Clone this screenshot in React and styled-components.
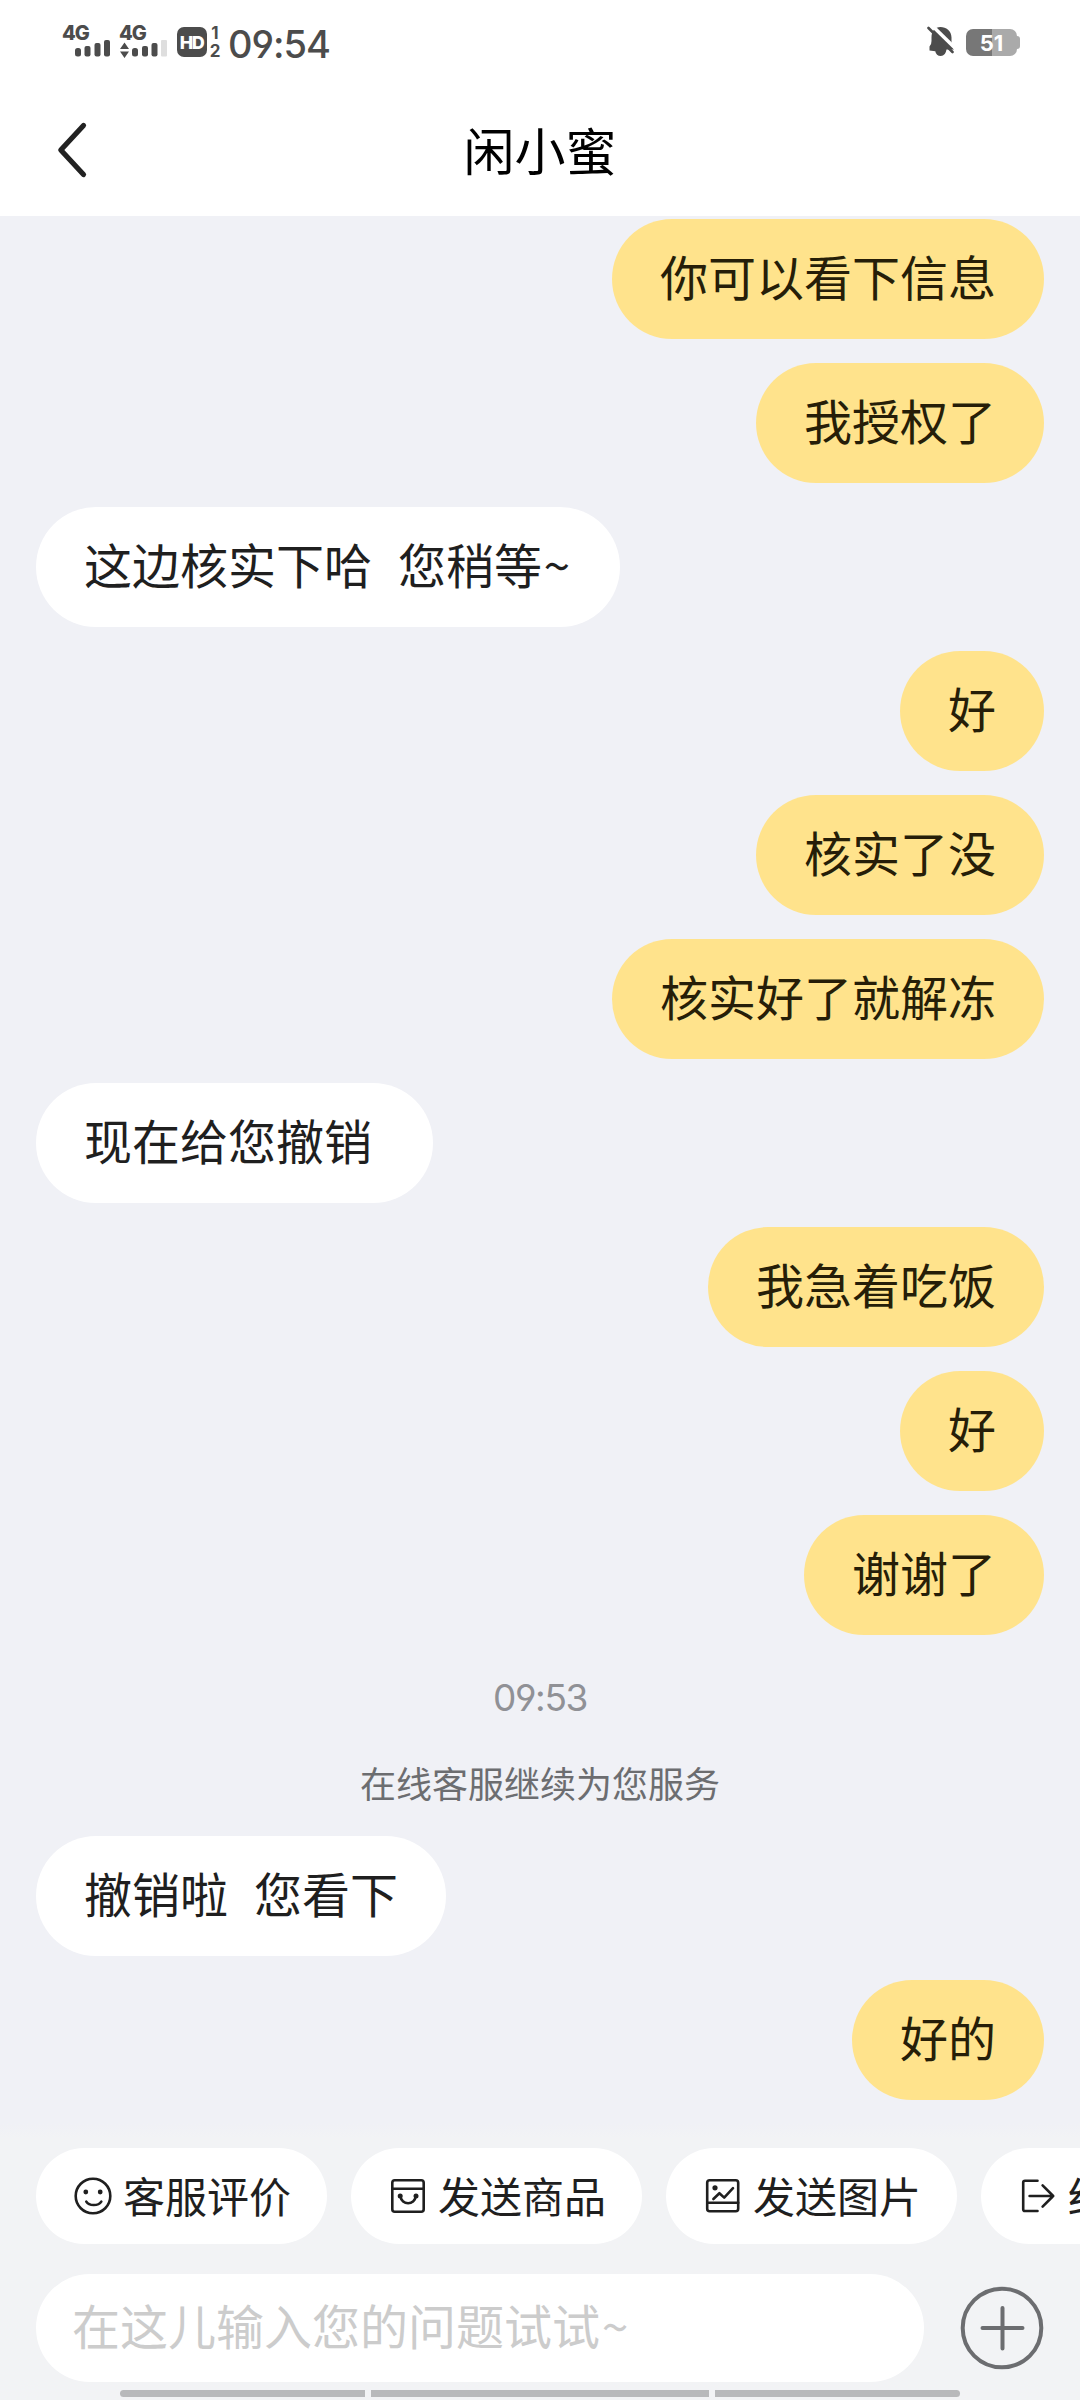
import React from "react";
import styled, { createGlobalStyle } from "styled-components";

const messages = [
  { id: 1, mine: true, text: "你可以看下信息" },
  { id: 2, mine: true, text: "我授权了" },
  { id: 3, text: "这边核实下哈  您稍等", tilde: true },
  { id: 4, mine: true, text: "好" },
  { id: 5, mine: true, text: "核实了没" },
  { id: 6, mine: true, text: "核实好了就解冻" },
  { id: 7, text: "现在给您撤销 " },
  { id: 8, mine: true, text: "我急着吃饭" },
  { id: 9, mine: true, text: "好" },
  { id: 10, mine: true, text: "谢谢了" },
];

const laterMessages = [
  { id: 11, text: "撤销啦  您看下" },
  { id: 12, mine: true, text: "好的" },
];

const SmileIcon = () => (
  <ChipIcon viewBox="0 0 42 42">
    <circle cx="21" cy="21" r="17.3" />
    <circle cx="13.8" cy="17" r="2.4" className="dot" />
    <circle cx="28.2" cy="17" r="2.4" className="dot" />
    <path d="M14.3 26.6C17 31.2 26.4 31.2 29.3 26.6" />
  </ChipIcon>
);

const BagIcon = () => (
  <ChipIcon viewBox="0 0 42 42">
    <rect x="5.3" y="5.3" width="31.4" height="31.4" rx="2.5" />
    <path d="M5.3 13.8H36.7M13.2 21C15 30.6 27.2 30.6 29 21" />
    <circle cx="13.2" cy="21" r="2.5" className="dot" />
    <circle cx="29" cy="21" r="2.5" className="dot" />
  </ChipIcon>
);

const PictureIcon = () => (
  <ChipIcon viewBox="0 0 42 42">
    <rect x="5.2" y="5.3" width="31" height="31" rx="2.5" />
    <path d="M5.2 27.8H36.2M11.4 24L17.4 18.2L22.2 22.6L31 13.2" />
    <circle cx="13" cy="12.8" r="2.6" className="dot" />
  </ChipIcon>
);

const ExitIcon = () => (
  <ChipIcon viewBox="0 0 42 42">
    <path d="M20.5 5.8H8Q6.2 5.8 6.2 7.6V34.2Q6.2 36 8 36H20.5" />
    <path d="M12.6 21H36.2M25.6 10.4L36.2 21L25.6 31.6" />
  </ChipIcon>
);

const chips = [
  { label: "客服评价", Icon: SmileIcon },
  { label: "发送商品", Icon: BagIcon },
  { label: "发送图片", Icon: PictureIcon },
  { label: "结束服务", Icon: ExitIcon },
];

const StatusBar = () => (
  <Status>
    <StatusGroup>
      <svg width="110" height="46" viewBox="-2 -10 110 46" fill="#4c4c4c">
        <NetText x="-1" y="15">4G</NetText>
        <rect x="12" y="23" width="6" height="8.5" rx="2.5" />
        <rect x="21.5" y="21" width="6" height="10.5" rx="2" />
        <rect x="31.5" y="18" width="6" height="13.5" rx="2" />
        <rect x="41" y="15" width="6" height="16.5" rx="2" />
        <NetText x="56" y="15">4G</NetText>
        <path d="M57 24L61.5 17.5L66 24ZM57 26.5H66L61.5 33Z" />
        <rect x="69" y="23" width="6" height="8.5" rx="2.5" />
        <rect x="79" y="21" width="6" height="10.5" rx="2" />
        <rect x="88.5" y="18" width="6" height="13.5" rx="2" />
        <rect x="98" y="15" width="6" height="16.5" rx="1" fill="#dedede" />
      </svg>
      <HdBadge>HD</HdBadge>
      <SimNumbers>
        <span>1</span>
        <span>2</span>
      </SimNumbers>
      <Clock>09:54</Clock>
    </StatusGroup>
    <StatusGroup>
      <BellIcon width="28" height="32" viewBox="0 0 28 32">
        <path
          d="M2.5 24.5V21.5Q4.5 20 4.5 16V12.5C4.5 6 8 2 13.5 2S24.5 6 24.5 12.5V18.5Q24.5 21 27 24.5H19.5Q18.5 31 13.8 31T8.3 26.2L2.5 25.5Z"
          fill="#4c4c4c"
        />
        <path d="M5 .5L29 24" stroke="#fff" strokeWidth="3.5" />
        <path d="M1.5 3L25.5 27" stroke="#4c4c4c" strokeWidth="2.6" strokeLinecap="round" />
      </BellIcon>
      <Battery>
        <BatteryBody>51</BatteryBody>
        <BatteryTip />
      </Battery>
    </StatusGroup>
  </Status>
);

const Message = ({ mine, text, tilde }) => (
  <Bubble $mine={mine}>
    {text}
    {tilde && <Tilde>~</Tilde>}
  </Bubble>
);

const App = () => {
  return (
    <>
      <GlobalStyle />
      <Screen>
        <StatusBar />
        <Header>
          <BackButton>
            <svg width="32" height="60" viewBox="0 0 32 60" fill="none">
              <path
                d="M27.5 5.5L4.8 30L27.5 54.5"
                stroke="#222"
                strokeWidth="5.2"
                strokeLinecap="round"
                strokeLinejoin="round"
              />
            </svg>
          </BackButton>
          <Title>闲小蜜</Title>
        </Header>
        <Chat>
          {messages.map((msg) => (
            <Message key={msg.id} {...msg} />
          ))}
          <TimeStamp>09:53</TimeStamp>
          <Notice>在线客服继续为您服务</Notice>
          {laterMessages.map((msg) => (
            <Message key={msg.id} {...msg} />
          ))}
        </Chat>
        <Footer>
          <Chips>
            {chips.map(({ label, Icon }) => (
              <Chip key={label}>
                <Icon />
                <ChipLabel>{label}</ChipLabel>
              </Chip>
            ))}
          </Chips>
          <InputRow>
            <Input>
              在这儿输入您的问题试试<Tilde>~</Tilde>
            </Input>
            <AddButton>
              <svg width="84" height="84" viewBox="0 0 84 84" fill="none" stroke="#6c6d70">
                <circle cx="42" cy="42" r="39.3" strokeWidth="4" />
                <path d="M22.5 42H62.5M42.5 22V62.5" strokeWidth="4" strokeLinecap="round" />
              </svg>
            </AddButton>
          </InputRow>
          <NavBar>
            <NavPill $width={245} $left />
            <NavPill $width={338} />
            <NavPill $width={245} $right />
          </NavBar>
        </Footer>
      </Screen>
    </>
  );
};

const GlobalStyle = createGlobalStyle`
  * {
    box-sizing: border-box;
  }
  body {
    margin: 0;
    background: #f0f1f6;
    font-family: "Noto Sans CJK SC", sans-serif;
  }
`;
const Screen = styled.div`
  display: flex;
  flex-direction: column;
  width: 1080px;
  height: 2400px;
  overflow: hidden;
`;
const Status = styled.div`
  display: flex;
  justify-content: space-between;
  height: 84px;
  padding: 15px 60px 0 61px;
  background: #fff;
`;
const StatusGroup = styled.div`
  display: flex;
  align-items: flex-start;
`;
const NetText = styled.text`
  font-family: Inter, sans-serif;
  font-size: 20px;
  font-weight: 800;
  letter-spacing: -1px;
`;
const HdBadge = styled.div`
  width: 30px;
  height: 30px;
  margin: 12px 0 0 6px;
  border-radius: 7px;
  background: #4c4c4c;
  color: #fff;
  font-family: Inter, sans-serif;
  font-size: 18px;
  font-weight: 800;
  letter-spacing: -1.5px;
  line-height: 31px;
  text-indent: -1px;
  text-align: center;
`;
const SimNumbers = styled.div`
  display: flex;
  flex-direction: column;
  width: 12px;
  margin: 9px 0 0 2px;
  color: #4c4c4c;
  font-family: Inter, sans-serif;
  font-size: 17px;
  font-weight: 700;
  line-height: 18px;
  text-align: center;
`;
const Clock = styled.div`
  margin: 10px 0 0 7px;
  color: #4c4c4c;
  font-family: Inter, sans-serif;
  font-feature-settings: "cv04";
  font-size: 38px;
  font-weight: 500;
  letter-spacing: -1px;
  line-height: 38px;
`;
const BellIcon = styled.svg`
  margin-top: 10px;
`;
const Battery = styled.div`
  display: flex;
  align-items: center;
  margin: 14px 0 0 11px;
`;
const BatteryBody = styled.div`
  width: 51px;
  height: 27px;
  border-radius: 7px;
  background: linear-gradient(90deg, #777 51%, #aaa 51%);
  color: #fff;
  font-family: Inter, sans-serif;
  font-size: 22px;
  font-weight: 700;
  line-height: 28px;
  text-align: center;
`;
const BatteryTip = styled.div`
  width: 3px;
  height: 13px;
  border-radius: 0 3px 3px 0;
  background: #aaa;
`;
const Header = styled.header`
  display: grid;
  grid-template-columns: 200px 1fr 200px;
  align-items: center;
  height: 132px;
  background: #fff;
`;
const BackButton = styled.button`
  display: flex;
  padding: 0 0 0 56px;
  border: none;
  background: none;
`;
const Title = styled.h1`
  margin: 0;
  padding-bottom: 3px;
  color: #000;
  font-size: 51px;
  font-weight: 400;
  line-height: 60px;
  text-align: center;
`;
const Chat = styled.main`
  display: flex;
  flex-direction: column;
  align-items: flex-start;
  height: 1908px;
  padding: 3px 36px 0;
`;
const Bubble = styled.div`
  flex: none;
  align-self: ${(props) => (props.$mine ? "flex-end" : "flex-start")};
  height: 120px;
  margin-bottom: 24px;
  padding: 0 48px;
  border-radius: 60px;
  background: ${(props) => (props.$mine ? "#ffe38c" : "#fff")};
  color: ${(props) => (props.$mine ? "#261e08" : "#1f1f1f")};
  font-size: 48px;
  line-height: 113px;
  white-space: pre;
  word-spacing: 2.2px;
`;
const Tilde = styled.span`
  display: inline-block;
  width: 30px;
  text-align: center;
`;
const TimeStamp = styled.div`
  align-self: center;
  height: 78px;
  padding-top: 18px;
  color: #909196;
  font-family: Inter, sans-serif;
  font-feature-settings: "cv04";
  font-size: 37px;
  font-weight: 400;
  letter-spacing: -1.4px;
  line-height: 42px;
`;
const Notice = styled.div`
  align-self: center;
  height: 99px;
  padding-top: 18px;
  color: #6c6d70;
  font-size: 36px;
  line-height: 54px;
`;
const Footer = styled.footer`
  height: 276px;
  padding-top: 24px;
  background: linear-gradient(#f0f1f6, #f2f3f5 14px);
`;
const Chips = styled.div`
  display: flex;
  gap: 24px;
  padding-left: 36px;
  overflow: hidden;
`;
const Chip = styled.button`
  display: flex;
  flex: none;
  align-items: center;
  gap: 9px;
  height: 96px;
  padding: 0 36px;
  border: none;
  border-radius: 48px;
  background: #fff;
  color: #1f1f1f;
  font-family: inherit;
  font-size: 42px;
  line-height: 60px;
`;
const ChipLabel = styled.span`
  padding-bottom: 3px;
`;
const ChipIcon = styled.svg`
  width: 42px;
  height: 42px;
  fill: none;
  stroke: #1f1f1f;
  stroke-width: 2.6;
  stroke-linecap: round;
  stroke-linejoin: round;

  .dot {
    fill: #1f1f1f;
    stroke: none;
  }
`;
const InputRow = styled.div`
  display: flex;
  align-items: center;
  gap: 36px;
  margin-top: 30px;
  padding-left: 36px;
`;
const Input = styled.div`
  width: 888px;
  height: 108px;
  padding-left: 36px;
  border-radius: 54px;
  background: #fff;
  color: #ccc;
  font-size: 48px;
  line-height: 101px;
`;
const AddButton = styled.button`
  display: flex;
  padding: 0;
  border: none;
  background: none;
`;
const NavBar = styled.div`
  display: flex;
  justify-content: center;
  gap: 6px;
  margin-top: 8px;
`;
const NavPill = styled.div`
  width: ${(props) => props.$width}px;
  height: 7px;
  border-radius: ${(props) =>
    props.$left ? "4px 0 0 4px" : props.$right ? "0 4px 4px 0" : "0"};
  background: #b8b9bb;
`;

export default App;
